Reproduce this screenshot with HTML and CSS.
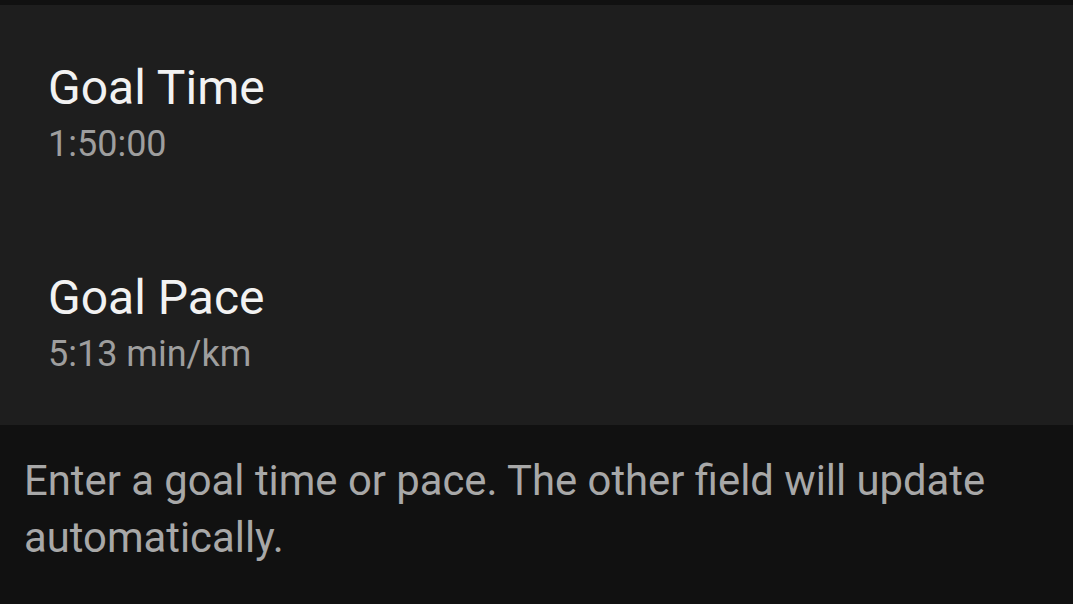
FILE: index.html
```html
<!DOCTYPE html>
<html>
<head>
<meta charset="utf-8">
<link rel="stylesheet" href="styles.css">
</head>
<body>
<div class="topbar"></div>
<div class="panel">
  <div class="item">
    <div class="title">Goal Time</div>
    <div class="value">1:50:00</div>
  </div>
  <div class="item">
    <div class="title">Goal Pace</div>
    <div class="value">5:13 min/km</div>
  </div>
</div>
<div class="footer">
  <p class="hint">Enter a goal time or pace. The other field will update automatically.</p>
</div>
</body>
</html>
```
FILE: styles.css
```css
html, body {
  margin: 0;
  padding: 0;
  background: #111111;
  font-family: Roboto, "Liberation Sans", sans-serif;
  height: 100%;
  overflow: hidden;
}
.topbar {
  height: 5px;
  background: #111111;
}
.panel {
  background: #1e1e1e;
}
.item {
  height: 210px;
  box-sizing: border-box;
  padding: 55px 0 0 48px;
}
.title {
  font-size: 48px;
  line-height: 56px;
  color: #f2f2f2;
}
.value {
  margin-top: 8px;
  font-size: 36px;
  line-height: 40px;
  color: #9e9e9e;
}
.footer {
  padding: 27px 60px 0 24px;
}
.hint {
  margin: 0;
  font-size: 41.8px;
  line-height: 57px;
  color: #a8a8a8;
}
```
